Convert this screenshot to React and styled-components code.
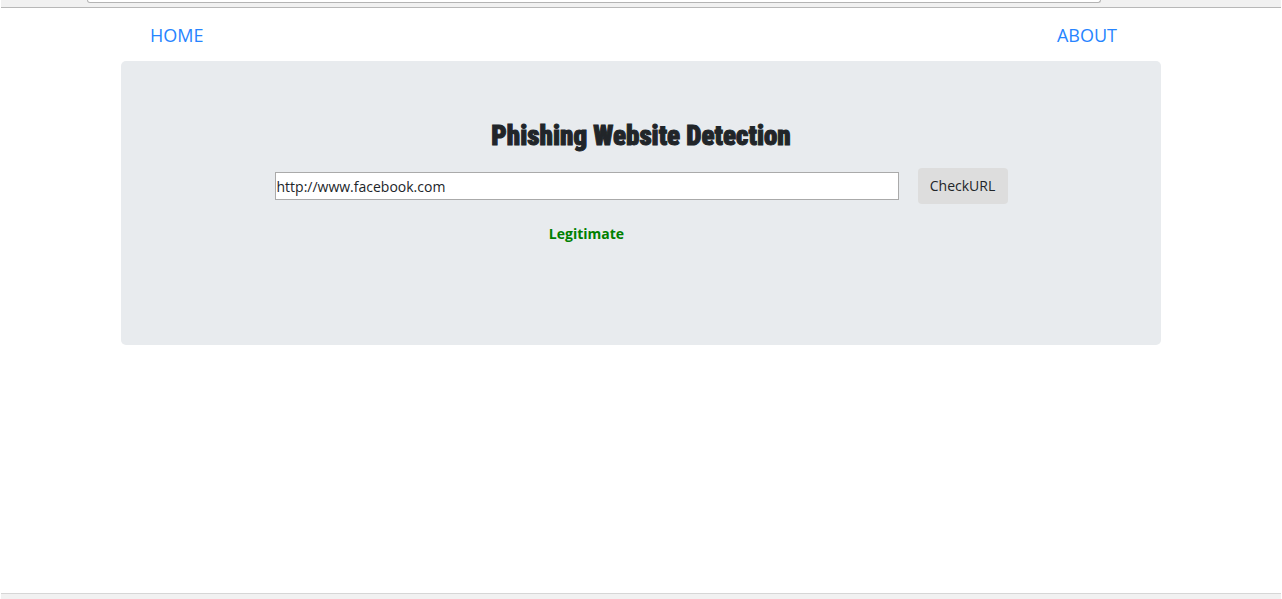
import React, { useState } from "react";
import styled, { createGlobalStyle } from "styled-components";

const GlobalStyle = createGlobalStyle`
  *, *::before, *::after { box-sizing: border-box; }
  body {
    margin: 0;
    background: #fff;
    color: #212529;
    font: 14px/24px "Open Sans", "Noto Sans", sans-serif;
  }
`;

const Page = styled.div`
  display: flex;
  flex-direction: column;
  min-height: 100vh;
  padding: 0 1px;
`;

const TopBar = styled.div`
  height: 8px;
  padding: 0 180px 0 86px;
  background: #f1f1f1;
  border-bottom: 1px solid #b8b8b8;
`;

const AddressField = styled.div`
  height: 3px;
  background: #fff;
  border: 1px solid #b4b4b4;
  border-top: 0;
  border-radius: 0 0 3px 3px;
`;

const BottomBar = styled.div`
  height: 6px;
  background: #f1f1f1;
  border-top: 1px solid #d6d6d6;
`;

const Content = styled.div`
  flex: 1;
  width: 100%;
  max-width: 1040px;
  margin: 0 auto;
`;

const Nav = styled.nav`
  display: flex;
  justify-content: space-between;
  padding: 13px 44px 12px 29px;
`;

const NavLink = styled.a`
  color: #2684ff;
  font-size: 18px;
  line-height: 28px;
  text-decoration: none;
`;

const Panel = styled.main`
  min-height: 284px;
  padding: 58px 32px 32px;
  background: #e8ebee;
  border-radius: 5px;
`;

const Title = styled.h1`
  margin: 0 0 15px;
  font: 900 27px/34px Impact, "Roboto Condensed", "Liberation Sans Narrow", sans-serif;
  text-align: center;
  -webkit-text-stroke: 1px currentColor;
`;

const CheckForm = styled.form`
  display: flex;
  align-items: center;
  justify-content: center;
  gap: 19px;
`;

const UrlInput = styled.input`
  flex: 0 1 624px;
  min-width: 0;
  height: 28px;
  padding: 0 1px;
  border: 1px solid #aaa;
  background: #fff;
  color: #212529;
  font: inherit;
`;

const CheckButton = styled.button`
  width: 90px;
  height: 36px;
  padding: 0;
  border: 0;
  border-radius: 4px;
  background: #ddd;
  color: #212529;
  font: inherit;
`;

const Result = styled.output`
  display: block;
  margin: 18px 109px 0 0;
  color: green;
  font-weight: 700;
  text-align: center;
`;

export default function App() {
  const [url, setUrl] = useState("http://www.facebook.com");

  return (
    <>
      <GlobalStyle />
      <Page>
        <TopBar>
          <AddressField />
        </TopBar>
        <Content>
          <Nav>
            <NavLink href="#home">HOME</NavLink>
            <NavLink href="#about">ABOUT</NavLink>
          </Nav>
          <Panel>
            <Title>Phishing Website Detection</Title>
            <CheckForm onSubmit={(event) => event.preventDefault()}>
              <UrlInput
                id="url"
                type="text"
                aria-label="Website URL"
                value={url}
                onChange={(event) => setUrl(event.target.value)}
              />
              <CheckButton type="submit">CheckURL</CheckButton>
            </CheckForm>
            <Result htmlFor="url">Legitimate</Result>
          </Panel>
        </Content>
        <BottomBar />
      </Page>
    </>
  );
}
